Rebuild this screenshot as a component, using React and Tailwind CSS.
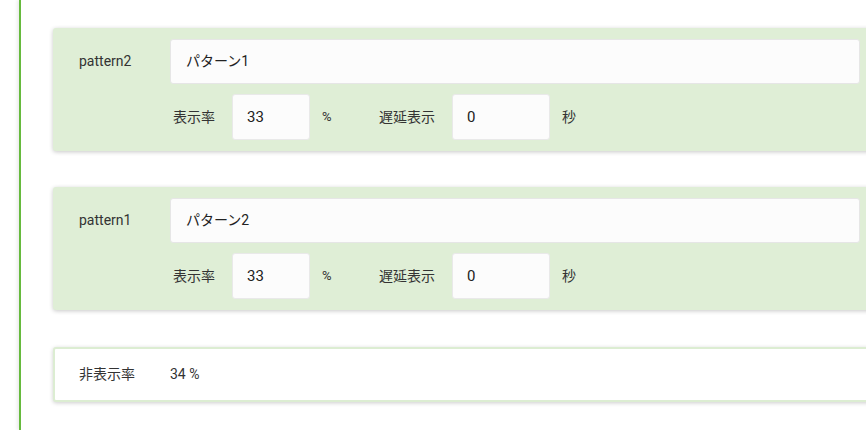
import React from "react";

const font = { fontFamily: "Roboto, 'Noto Sans CJK JP', sans-serif" };

function PatternCard({ label, name, rate, delay }) {
  return (
    <div className="flex w-[830px] rounded-[3px] bg-[#dfeed6] pt-[11px] pb-[11px] shadow-[0_1px_4px_rgba(0,0,0,0.22)]">
      <div className="w-[117px] shrink-0 pl-[26px] pt-[13px] text-[14px] leading-[18px] text-[#333]">
        {label}
      </div>
      <div className="flex flex-col gap-[10px]">
        <div className="flex h-[45px] w-[690px] items-center rounded-[3px] border border-[#e6e6e6] bg-[#fcfcfc] pl-[15px] text-[14px] text-[#222]">
          {name}
        </div>
        <div className="flex h-[46px] items-center text-[14px] text-[#333]">
          <span className="ml-[3px] w-[59px]">表示率</span>
          <div className="flex h-[46px] w-[78px] items-center rounded-[3px] border border-[#e9e9e9] bg-[#fcfcfc] pl-[14px] text-[15px] text-[#222]">
            {rate}
          </div>
          <span className="ml-[12px] w-[57px] text-[13px]">%</span>
          <span className="w-[73px]">遅延表示</span>
          <div className="flex h-[46px] w-[98px] items-center rounded-[3px] border border-[#e9e9e9] bg-[#fcfcfc] pl-[14px] text-[15px] text-[#222]">
            {delay}
          </div>
          <span className="ml-[12px]">秒</span>
        </div>
      </div>
    </div>
  );
}

export default function App() {
  return (
    <div className="h-[430px] w-[866px] overflow-hidden bg-white" style={font}>
      <div className="ml-[19px] h-full border-l-2 border-[#66ba3e] pl-[32px] pt-[28px] shadow-[-2px_0_3px_rgba(0,0,0,0.08)]">
        <div className="flex flex-col">
          <PatternCard label="pattern2" name="パターン1" rate="33" delay="0" />
          <div className="h-[36px]" />
          <PatternCard label="pattern1" name="パターン2" rate="33" delay="0" />
          <div className="h-[37px]" />
          <div className="flex h-[55px] w-[830px] items-center rounded-[3px] border-2 border-[#dcedd2] bg-white shadow-[0_1px_4px_rgba(0,0,0,0.2)]">
            <span className="w-[115px] pl-[24px] text-[14px] text-[#333]">非表示率</span>
            <span className="text-[14px] text-[#333]">34 %</span>
          </div>
        </div>
      </div>
    </div>
  );
}
